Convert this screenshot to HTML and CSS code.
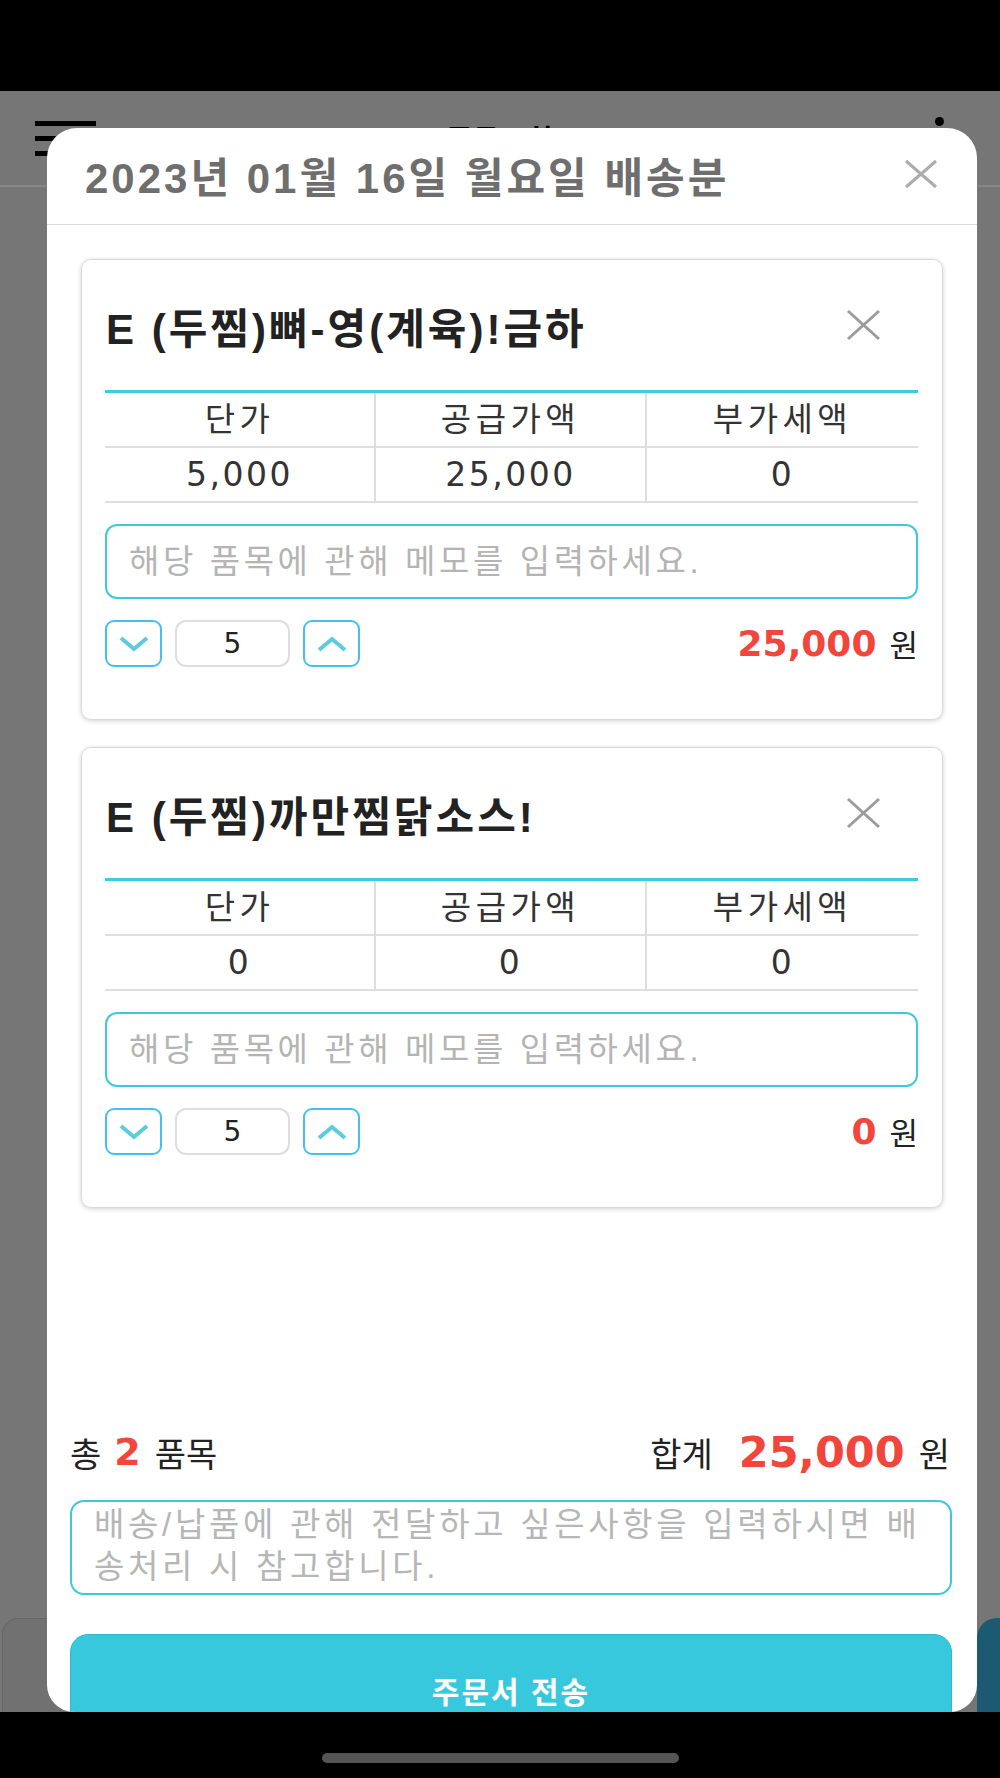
FILE: index.html
```html
<!DOCTYPE html>
<html lang="ko">
<head>
<meta charset="utf-8">
<title>주문조회</title>
<link rel="stylesheet" href="styles.css">
</head>
<body>
<div class="phone">
  <div class="status-bar"></div>
  <div class="app">
    <header class="app-header">
      <div class="slot slot-left"><span class="hamburger"><i></i><i></i><i></i></span></div>
      <h1 class="app-title">주문조회</h1>
      <div class="slot slot-right"><span class="kebab"><i></i><i></i><i></i></span></div>
    </header>
    <main class="app-content"></main>
    <div class="app-actions">
      <button class="act act-ghost" aria-label="취소"></button>
      <button class="act act-primary" aria-label="주문"></button>
    </div>

    <section class="modal">
      <div class="modal-header">
        <h2 class="modal-title">2023년 01월 16일 월요일 배송분</h2>
        <button class="icon-btn modal-close" aria-label="닫기">
          <svg width="34" height="30" viewBox="0 0 34 30"><path d="M2 2L32 28M32 2L2 28" stroke="#acacac" stroke-width="3" fill="none"/></svg>
        </button>
      </div>

      <div class="modal-body">
        <article class="item-card">
          <div class="item-head">
            <h3 class="item-name">E (두찜)뼈-영(계육)!금하</h3>
            <button class="icon-btn item-remove" aria-label="삭제">
              <svg width="35" height="32" viewBox="0 0 35 32"><path d="M2 2L33 30M33 2L2 30" stroke="#9c9c9c" stroke-width="3" fill="none"/></svg>
            </button>
          </div>
          <div class="price-table">
            <div class="cell head">단가</div>
            <div class="cell head">공급가액</div>
            <div class="cell head">부가세액</div>
            <div class="cell num">5,000</div>
            <div class="cell num">25,000</div>
            <div class="cell num">0</div>
          </div>
          <input class="memo" type="text" placeholder="해당 품목에 관해 메모를 입력하세요.">
          <div class="item-foot">
            <div class="stepper">
              <button class="step-btn" aria-label="감소">
                <svg width="30" height="16" viewBox="0 0 30 16"><polyline points="2,2 15,13 28,2" stroke="#5ccbe2" stroke-width="4" fill="none"/></svg>
              </button>
              <input class="qty" type="text" value="5" readonly>
              <button class="step-btn" aria-label="증가">
                <svg width="30" height="16" viewBox="0 0 30 16"><polyline points="2,14 15,3 28,14" stroke="#5ccbe2" stroke-width="4" fill="none"/></svg>
              </button>
            </div>
            <div class="line-total"><span class="amount">25,000</span><span class="won">원</span></div>
          </div>
        </article>

        <article class="item-card">
          <div class="item-head">
            <h3 class="item-name">E (두찜)까만찜닭소스!</h3>
            <button class="icon-btn item-remove" aria-label="삭제">
              <svg width="35" height="32" viewBox="0 0 35 32"><path d="M2 2L33 30M33 2L2 30" stroke="#9c9c9c" stroke-width="3" fill="none"/></svg>
            </button>
          </div>
          <div class="price-table">
            <div class="cell head">단가</div>
            <div class="cell head">공급가액</div>
            <div class="cell head">부가세액</div>
            <div class="cell num">0</div>
            <div class="cell num">0</div>
            <div class="cell num">0</div>
          </div>
          <input class="memo" type="text" placeholder="해당 품목에 관해 메모를 입력하세요.">
          <div class="item-foot">
            <div class="stepper">
              <button class="step-btn" aria-label="감소">
                <svg width="30" height="16" viewBox="0 0 30 16"><polyline points="2,2 15,13 28,2" stroke="#5ccbe2" stroke-width="4" fill="none"/></svg>
              </button>
              <input class="qty" type="text" value="5" readonly>
              <button class="step-btn" aria-label="증가">
                <svg width="30" height="16" viewBox="0 0 30 16"><polyline points="2,14 15,3 28,14" stroke="#5ccbe2" stroke-width="4" fill="none"/></svg>
              </button>
            </div>
            <div class="line-total"><span class="amount">0</span><span class="won">원</span></div>
          </div>
        </article>
      </div>

      <div class="modal-footer">
        <div class="summary">
          <div class="count">총<span class="count-num">2</span>품목</div>
          <div class="total">합계<span class="total-num">25,000</span><span class="won">원</span></div>
        </div>
        <textarea class="request" placeholder="배송/납품에 관해 전달하고 싶은사항을 입력하시면 배&#10;송처리 시 참고합니다."></textarea>
        <button class="submit">주문서 전송</button>
      </div>
    </section>
  </div>
  <div class="nav-bar"><span class="home-pill"></span></div>
</div>
</body>
</html>
```

FILE: styles.css
```css
* { box-sizing: border-box; margin: 0; padding: 0; }
html, body { width: 1000px; height: 1778px; overflow: hidden; background: #000; }
body { font-family: "Liberation Sans", "Noto Sans CJK KR", sans-serif; color: #222; }
button, input, textarea { font-family: inherit; }

.phone { display: flex; flex-direction: column; height: 1778px; }
.status-bar { height: 91px; flex: none; background: #000; }
.nav-bar { height: 66px; flex: none; background: #000; display: flex; justify-content: center; padding-top: 41px; }
.home-pill { width: 357px; height: 10px; border-radius: 5px; background: #555; }

/* dimmed app behind the modal */
.app { position: relative; flex: 1; display: flex; flex-direction: column; background: #767676; overflow: hidden; }
.app-header { height: 96px; flex: none; display: flex; align-items: center; justify-content: space-between; padding: 0 35px; border-bottom: 2px solid #878787; }
.slot { width: 100px; display: flex; }
.slot-right { justify-content: flex-end; padding-right: 21px; }
.hamburger { display: flex; flex-direction: column; gap: 10px; width: 61px; }
.hamburger i { display: block; height: 5px; background: #000; }
.kebab { display: flex; flex-direction: column; gap: 8px; }
.kebab i { display: block; width: 9px; height: 9px; border-radius: 50%; background: #000; }
.app-title { font-size: 28px; font-weight: 700; color: #000; letter-spacing: 1px; }
.app-content { flex: 1; }
.app-actions { height: 94px; flex: none; display: flex; padding-left: 2px; }
.act { border: 0; }
.act-ghost { flex: 1; margin-right: 17px; background: #717171; border: 1px solid #666; border-bottom: 0; border-radius: 16px 16px 0 0; }
.act-primary { width: 23px; background: #1c5a71; border-radius: 20px 0 0 0; }

/* modal */
.modal { position: absolute; top: 37px; left: 47px; width: 930px; bottom: 0; background: #fff; border-radius: 30px 30px 27px 27px; display: flex; flex-direction: column; overflow: hidden; }
.modal-header { height: 97px; flex: none; display: flex; align-items: center; justify-content: space-between; padding: 0 39px 4px 38px; border-bottom: 1px solid #dcdcdc; }
.modal-title { font-size: 42px; font-weight: 700; color: #6e6e6e; letter-spacing: 3px; }
.icon-btn { border: 0; background: none; display: flex; align-items: center; justify-content: center; }

.modal-body { flex: 1; min-height: 0; overflow: hidden; padding: 34px 34px 0; display: flex; flex-direction: column; gap: 27px; }

.item-card { flex: none; border: 1px solid #d9d9d9; border-radius: 10px; box-shadow: 0 1px 5px rgba(0,0,0,.18); padding: 0 24px 52px 23px; }
.item-head { height: 130px; display: flex; align-items: center; justify-content: space-between; }
.item-name { padding-left: 1px; font-size: 42px; font-weight: 700; color: #222; letter-spacing: 3px; }
.item-remove { margin-right: 37px; }

.price-table { display: grid; grid-template-columns: repeat(3, 1fr); border-top: 3px solid #3ccbe0; }
.cell { height: 55px; display: flex; align-items: center; justify-content: center; border-bottom: 2px solid #dedede; color: #333; }
.cell:not(:nth-child(3n)) { border-right: 2px solid #dedede; }
.cell.head { font-size: 33px; letter-spacing: 4.5px; padding-bottom: 6px; }
.cell.num { font-family: "DejaVu Sans", "Noto Sans CJK KR", sans-serif; font-size: 33px; letter-spacing: 2.5px; }

.memo { display: block; width: 100%; height: 75px; margin-top: 21px; border: 2px solid #3cc8e0; border-radius: 12px; padding: 0 8px 0 22px; font-size: 33px; letter-spacing: 3.6px; color: #333; outline: none; }
.memo::placeholder { color: #b4b4b4; }

.item-foot { margin-top: 21px; height: 47px; display: flex; align-items: center; justify-content: space-between; }
.stepper { display: flex; align-items: center; gap: 13px; }
.step-btn { width: 57px; height: 47px; border: 2px solid #45bff2; border-radius: 9px; background: #fff; display: flex; align-items: center; justify-content: center; }
.qty { width: 115px; height: 47px; border: 2px solid #dedede; border-radius: 11px; text-align: center; font-family: "DejaVu Sans", sans-serif; font-size: 28px; color: #222; outline: none; background: #fff; }
.line-total { display: flex; align-items: center; }
.amount { font-family: "DejaVu Sans", sans-serif; font-weight: 700; font-size: 36px; color: #f2453b; }
.won { font-size: 31px; color: #222; margin-left: 13px; }

/* footer */
.modal-footer { height: 290px; flex: none; padding: 0 25px 0 23px; }
.summary { height: 60px; display: flex; align-items: center; justify-content: space-between; padding-right: 2px; }
.count, .total { display: flex; align-items: center; font-size: 34px; color: #222; }
.count-num { font-family: "DejaVu Sans", sans-serif; font-weight: 700; font-size: 38px; color: #f2453b; margin: 0 14px 0 13px; }
.total-num { font-family: "DejaVu Sans", sans-serif; font-weight: 700; font-size: 43px; color: #f2453b; margin-left: 26px; }
.total .won { font-size: 34px; margin-left: 14px; }

.request { display: block; width: 100%; height: 95px; margin-top: 18px; border: 2px solid #3cc8e0; border-radius: 14px; padding: 2px 6px 2px 22px; font-size: 33px; line-height: 42px; letter-spacing: 3.7px; color: #333; resize: none; outline: none; overflow: hidden; }
.request::placeholder { color: #b6b6b6; }

.submit { display: block; width: 100%; height: 112px; margin-top: 39px; background: #38c8de; border: 1px solid #2fb8cf; border-radius: 18px; color: #fff; font-weight: 700; font-size: 30px; letter-spacing: 2px; }
```
